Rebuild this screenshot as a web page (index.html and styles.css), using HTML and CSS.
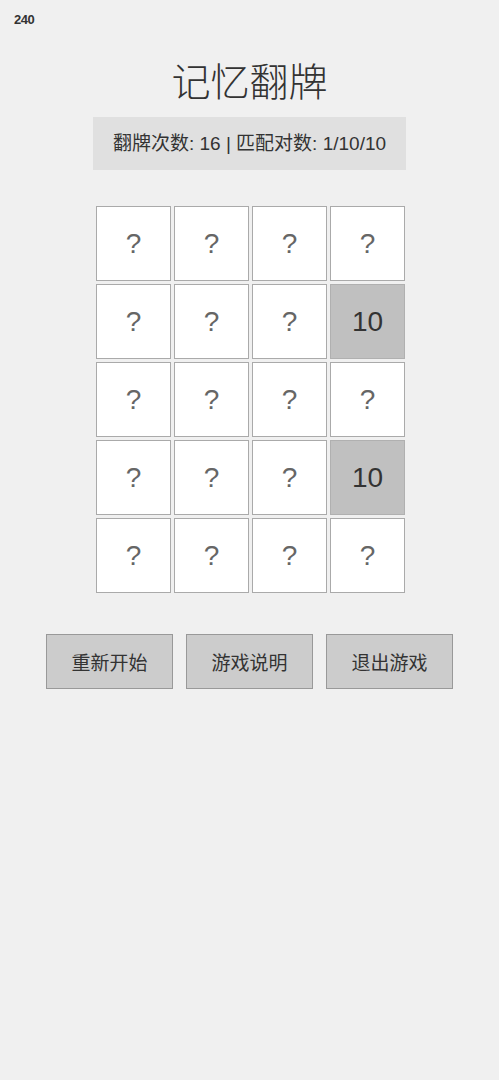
FILE: index.html
```html
<!DOCTYPE html>
<html lang="zh">
<head>
<meta charset="UTF-8">
<title>记忆翻牌</title>
<link rel="stylesheet" href="styles.css">
</head>
<body>
<div class="fps">240</div>

<div class="game">
  <h1 class="title">记忆翻牌</h1>
  <div class="stats">翻牌次数: 16 | 匹配对数: 1/10/10</div>

  <div class="board">
    <div class="card">?</div>
    <div class="card">?</div>
    <div class="card">?</div>
    <div class="card">?</div>

    <div class="card">?</div>
    <div class="card">?</div>
    <div class="card">?</div>
    <div class="card flipped">10</div>

    <div class="card">?</div>
    <div class="card">?</div>
    <div class="card">?</div>
    <div class="card">?</div>

    <div class="card">?</div>
    <div class="card">?</div>
    <div class="card">?</div>
    <div class="card flipped">10</div>

    <div class="card">?</div>
    <div class="card">?</div>
    <div class="card">?</div>
    <div class="card">?</div>
  </div>

  <div class="controls">
    <button class="btn">重新开始</button>
    <button class="btn">游戏说明</button>
    <button class="btn">退出游戏</button>
  </div>
</div>
</body>
</html>
```

FILE: styles.css
```css
body {
  margin: 0;
  background-color: #f0f0f0;
  font-family: 'Liberation Sans', 'Noto Sans CJK SC', sans-serif;
  color: #333;
}
.fps {
  position: absolute;
  top: 12px;
  left: 14px;
  font-size: 13px;
  font-weight: bold;
  color: #333;
  letter-spacing: -0.5px;
}
.game {
  display: flex;
  flex-direction: column;
  align-items: center;
  padding-top: 55px;
}
.title {
  margin: 0;
  font-family: 'Noto Sans CJK SC', sans-serif;
  font-weight: 300;
  font-size: 39px;
  line-height: 48px;
  color: #333;
}
.stats {
  margin-top: 14px;
  width: 313px;
  height: 53px;
  line-height: 53px;
  text-align: center;
  background-color: #e0e0e0;
  font-size: 19px;
  box-sizing: border-box;
}
.board {
  margin-top: 36px;
  margin-left: 2px;
  display: grid;
  grid-template-columns: repeat(4, 75px);
  grid-auto-rows: 75px;
  gap: 3px;
}
.card {
  box-sizing: border-box;
  border: 1px solid #aaa;
  background-color: #fff;
  display: flex;
  align-items: center;
  justify-content: center;
  font-size: 28px;
  color: #666;
}
.card.flipped {
  background-color: #c0c0c0;
  border-color: #b0b0b0;
  color: #333;
}
.controls {
  margin-top: 41px;
  display: flex;
  gap: 13px;
}
.btn {
  width: 127px;
  height: 55px;
  background-color: #ccc;
  border: 1px solid #999;
  font-family: 'Liberation Sans', 'Noto Sans CJK SC', sans-serif;
  font-size: 19px;
  color: #333;
  padding: 0;
}
```
